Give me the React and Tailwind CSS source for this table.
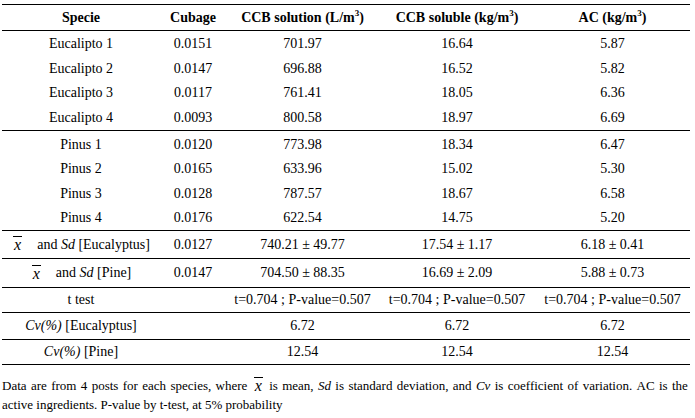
import React from "react";

const grid = "grid grid-cols-[158px_66px_153px_156px_155px]";

function Cell({ children, className = "" }) {
  return (
    <div className={"flex items-center justify-center whitespace-nowrap " + className}>
      {children}
    </div>
  );
}

function Xbar({ className = "" }) {
  return (
    <span className={"inline-block italic text-[16px] leading-[16px] border-t border-black px-[1px] " + className}>
      x
    </span>
  );
}

function Sup({ children }) {
  return <sup className="text-[9px] relative top-[-5px]">{children}</sup>;
}

const eucRows = [
  ["Eucalipto 1", "0.0151", "701.97", "16.64", "5.87"],
  ["Eucalipto 2", "0.0147", "696.88", "16.52", "5.82"],
  ["Eucalipto 3", "0.0117", "761.41", "18.05", "6.36"],
  ["Eucalipto 4", "0.0093", "800.58", "18.97", "6.69"],
];
const pineRows = [
  ["Pinus 1", "0.0120", "773.98", "18.34", "6.47"],
  ["Pinus 2", "0.0165", "633.96", "15.02", "5.30"],
  ["Pinus 3", "0.0128", "787.57", "18.67", "6.58"],
  ["Pinus 4", "0.0176", "622.54", "14.75", "5.20"],
];

function DataRow({ r }) {
  return (
    <div className={grid + " h-[24.5px]"}>
      {r.map((v, i) => (
        <Cell key={i}>{v}</Cell>
      ))}
    </div>
  );
}

export default function App() {
  const tt = "t=0.704 ; P-value=0.507";
  return (
    <div className="w-[695px] h-[418px] bg-white text-black font-[family-name:Liberation_Serif,serif] text-[14px] leading-[16px] pt-[4px] pl-[2px] overflow-hidden">
      <div className="w-[688px] border-t border-black">
        <div className={grid + " h-[26px] border-b border-black font-bold"}>
          <Cell>Specie</Cell>
          <Cell>Cubage</Cell>
          <Cell>
            CCB solution (L/m<Sup>3</Sup>)
          </Cell>
          <Cell>
            CCB soluble (kg/m<Sup>3</Sup>)
          </Cell>
          <Cell>
            AC (kg/m<Sup>3</Sup>)
          </Cell>
        </div>
        <div className="h-[100px] border-b border-black pt-[1px]">
          {eucRows.map((r) => (
            <DataRow key={r[0]} r={r} />
          ))}
        </div>
        <div className="h-[100px] border-b border-black pt-[1.5px]">
          {pineRows.map((r) => (
            <DataRow key={r[0]} r={r} />
          ))}
        </div>
        <div className={grid + " h-[28px] border-b border-black"}>
          <Cell>
            <Xbar className="mr-[15px] ml-[1px]" />
            and&nbsp;<i>Sd</i>&nbsp;[Eucalyptus]
          </Cell>
          <Cell>0.0127</Cell>
          <Cell>740.21 ± 49.77</Cell>
          <Cell>17.54 ± 1.17</Cell>
          <Cell>6.18 ± 0.41</Cell>
        </div>
        <div className={grid + " h-[29px] border-b border-black"}>
          <Cell>
            <Xbar className="mr-[15px] ml-[1px]" />
            and&nbsp;<i>Sd</i>&nbsp;[Pine]
          </Cell>
          <Cell>0.0147</Cell>
          <Cell>704.50 ± 88.35</Cell>
          <Cell>16.69 ± 2.09</Cell>
          <Cell>5.88 ± 0.73</Cell>
        </div>
        <div className={grid + " h-[25px] border-b border-black"}>
          <Cell>t test</Cell>
          <Cell></Cell>
          <Cell>{tt}</Cell>
          <Cell>{tt}</Cell>
          <Cell>{tt}</Cell>
        </div>
        <div className={grid + " h-[27px] border-b border-black"}>
          <Cell>
            <i>Cv(%)</i>&nbsp;[Eucalyptus]
          </Cell>
          <Cell></Cell>
          <Cell>6.72</Cell>
          <Cell>6.72</Cell>
          <Cell>6.72</Cell>
        </div>
        <div className={grid + " h-[25px] border-b border-black"}>
          <Cell>
            <i>Cv(%)</i>&nbsp;[Pine]
          </Cell>
          <Cell></Cell>
          <Cell>12.54</Cell>
          <Cell>12.54</Cell>
          <Cell>12.54</Cell>
        </div>
      </div>
      <div className="w-[686px] mt-[12px] text-[13px] leading-[18px]">
        <div className="whitespace-nowrap flex justify-between">
          <span>Data</span><span>are</span><span>from</span><span>4</span><span>posts</span><span>for</span><span>each</span><span>species,</span><span>where</span>
          <span className="pl-[2px] pr-[2px]"><Xbar className="text-[15px] leading-[14px]" /></span>
          <span>is</span><span>mean,</span><span><i>Sd</i></span><span>is</span><span>standard</span><span>deviation,</span><span>and</span><span><i>Cv</i></span><span>is</span><span>coefficient</span><span>of</span><span>variation.</span><span>AC</span><span>is</span><span>the</span>
        </div>
        <div>active ingredients. P-value by t-test, at 5% probability</div>
      </div>
    </div>
  );
}
